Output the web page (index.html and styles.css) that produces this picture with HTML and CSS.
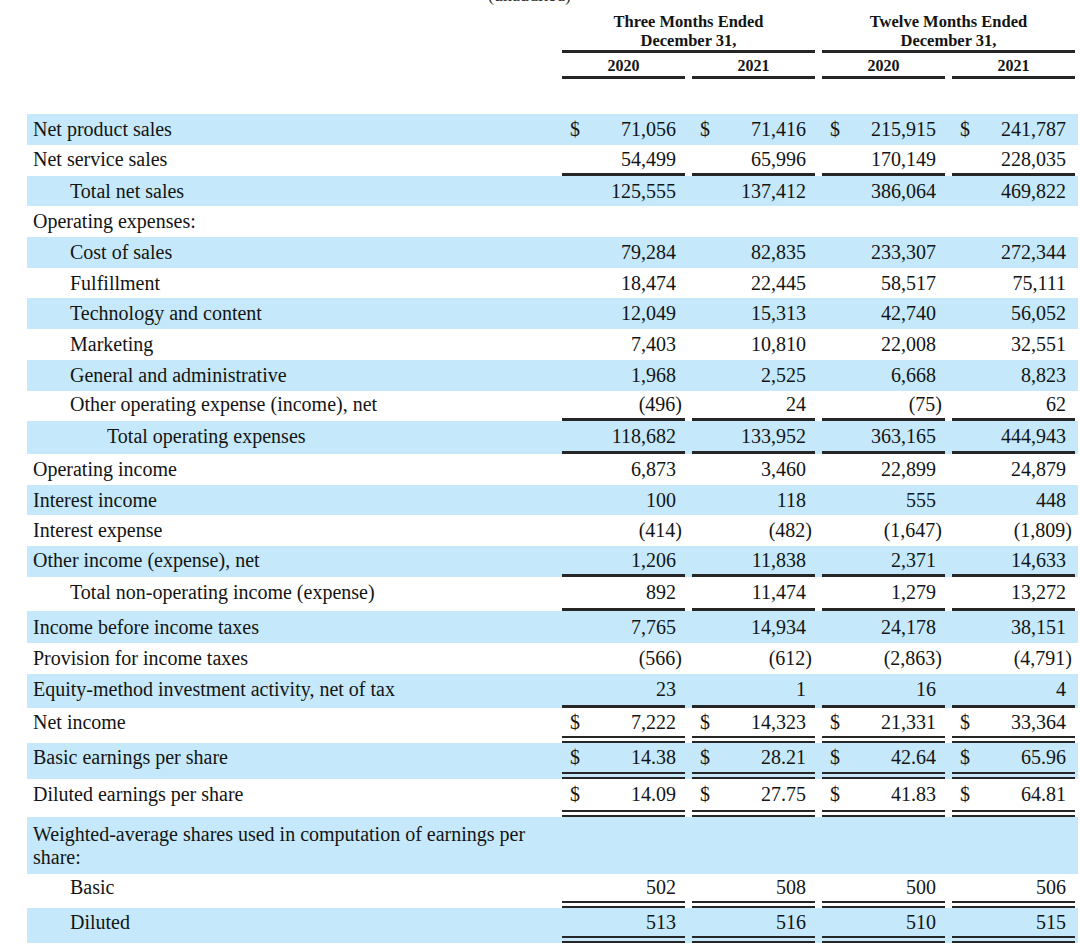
FILE: index.html
```html
<!DOCTYPE html>
<html lang="en">
<head>
<meta charset="utf-8">
<title>Consolidated Statements of Operations</title>
<link rel="stylesheet" href="styles.css">
</head>
<body>
<div class="page">
  <div class="caption"><span>(unaudited)</span></div>
  <div class="head">
    <div class="grp g1">Three Months Ended<br>December 31,</div>
    <div class="grp g2">Twelve Months Ended<br>December 31,</div>
  </div>
  <div class="years">
    <div></div>
    <div class="yr">2020</div>
    <div class="yr">2021</div>
    <div class="yr">2020</div>
    <div class="yr">2021</div>
  </div>

  <div class="tbl">
    <div class="row b h31"><div class="lbl">Net product sales</div><div class="v"><span class="d">$</span><span>71,056</span></div><div class="v"><span class="d">$</span><span>71,416</span></div><div class="v"><span class="d">$</span><span>215,915</span></div><div class="v"><span class="d">$</span><span>241,787</span></div></div>
    <div class="row u h31"><div class="lbl">Net service sales</div><div class="v"><span>54,499</span></div><div class="v"><span>65,996</span></div><div class="v"><span>170,149</span></div><div class="v"><span>228,035</span></div></div>
    <div class="row b h30"><div class="lbl i1">Total net sales</div><div class="v"><span>125,555</span></div><div class="v"><span>137,412</span></div><div class="v"><span>386,064</span></div><div class="v"><span>469,822</span></div></div>
    <div class="row h31"><div class="lbl">Operating expenses:</div><div class="v"></div><div class="v"></div><div class="v"></div><div class="v"></div></div>
    <div class="row b h31"><div class="lbl i1">Cost of sales</div><div class="v"><span>79,284</span></div><div class="v"><span>82,835</span></div><div class="v"><span>233,307</span></div><div class="v"><span>272,344</span></div></div>
    <div class="row h30"><div class="lbl i1">Fulfillment</div><div class="v"><span>18,474</span></div><div class="v"><span>22,445</span></div><div class="v"><span>58,517</span></div><div class="v"><span>75,111</span></div></div>
    <div class="row b h31"><div class="lbl i1">Technology and content</div><div class="v"><span>12,049</span></div><div class="v"><span>15,313</span></div><div class="v"><span>42,740</span></div><div class="v"><span>56,052</span></div></div>
    <div class="row h31"><div class="lbl i1">Marketing</div><div class="v"><span>7,403</span></div><div class="v"><span>10,810</span></div><div class="v"><span>22,008</span></div><div class="v"><span>32,551</span></div></div>
    <div class="row b h31"><div class="lbl i1">General and administrative</div><div class="v"><span>1,968</span></div><div class="v"><span>2,525</span></div><div class="v"><span>6,668</span></div><div class="v"><span>8,823</span></div></div>
    <div class="row u h30"><div class="lbl i1">Other operating expense (income), net</div><div class="v"><span class="neg">(496)</span></div><div class="v"><span>24</span></div><div class="v"><span class="neg">(75)</span></div><div class="v"><span>62</span></div></div>
    <div class="row b u h33"><div class="lbl i2">Total operating expenses</div><div class="v"><span>118,682</span></div><div class="v"><span>133,952</span></div><div class="v"><span>363,165</span></div><div class="v"><span>444,943</span></div></div>
    <div class="row h31"><div class="lbl">Operating income</div><div class="v"><span>6,873</span></div><div class="v"><span>3,460</span></div><div class="v"><span>22,899</span></div><div class="v"><span>24,879</span></div></div>
    <div class="row b h30"><div class="lbl">Interest income</div><div class="v"><span>100</span></div><div class="v"><span>118</span></div><div class="v"><span>555</span></div><div class="v"><span>448</span></div></div>
    <div class="row h31"><div class="lbl">Interest expense</div><div class="v"><span class="neg">(414)</span></div><div class="v"><span class="neg">(482)</span></div><div class="v"><span class="neg">(1,647)</span></div><div class="v"><span class="neg">(1,809)</span></div></div>
    <div class="row b u h31"><div class="lbl">Other income (expense), net</div><div class="v"><span>1,206</span></div><div class="v"><span>11,838</span></div><div class="v"><span>2,371</span></div><div class="v"><span>14,633</span></div></div>
    <div class="row u h34"><div class="lbl i1">Total non-operating income (expense)</div><div class="v"><span>892</span></div><div class="v"><span>11,474</span></div><div class="v"><span>1,279</span></div><div class="v"><span>13,272</span></div></div>
    <div class="row b h32"><div class="lbl">Income before income taxes</div><div class="v"><span>7,765</span></div><div class="v"><span>14,934</span></div><div class="v"><span>24,178</span></div><div class="v"><span>38,151</span></div></div>
    <div class="row h31"><div class="lbl">Provision for income taxes</div><div class="v"><span class="neg">(566)</span></div><div class="v"><span class="neg">(612)</span></div><div class="v"><span class="neg">(2,863)</span></div><div class="v"><span class="neg">(4,791)</span></div></div>
    <div class="row b u h34"><div class="lbl">Equity-method investment activity, net of tax</div><div class="v"><span>23</span></div><div class="v"><span>1</span></div><div class="v"><span>16</span></div><div class="v"><span>4</span></div></div>
    <div class="row uu h35"><div class="lbl">Net income</div><div class="v"><span class="d">$</span><span>7,222</span></div><div class="v"><span class="d">$</span><span>14,323</span></div><div class="v"><span class="d">$</span><span>21,331</span></div><div class="v"><span class="d">$</span><span>33,364</span></div></div>
    <div class="row b uu h36"><div class="lbl">Basic earnings per share</div><div class="v"><span class="d">$</span><span>14.38</span></div><div class="v"><span class="d">$</span><span>28.21</span></div><div class="v"><span class="d">$</span><span>42.64</span></div><div class="v"><span class="d">$</span><span>65.96</span></div></div>
    <div class="row uu h38"><div class="lbl">Diluted earnings per share</div><div class="v"><span class="d">$</span><span>14.09</span></div><div class="v"><span class="d">$</span><span>27.75</span></div><div class="v"><span class="d">$</span><span>41.83</span></div><div class="v"><span class="d">$</span><span>64.81</span></div></div>
    <div class="row b h57"><div class="lbl wrap">Weighted-average shares used in computation of earnings per share:</div><div class="v"></div><div class="v"></div><div class="v"></div><div class="v"></div></div>
    <div class="row uu h34"><div class="lbl i1">Basic</div><div class="v"><span>502</span></div><div class="v"><span>508</span></div><div class="v"><span>500</span></div><div class="v"><span>506</span></div></div>
    <div class="row b uu h35"><div class="lbl i1">Diluted</div><div class="v"><span>513</span></div><div class="v"><span>516</span></div><div class="v"><span>510</span></div><div class="v"><span>515</span></div></div>
  </div>
</div>
</body>
</html>
```
FILE: styles.css
```css
html, body {
  margin: 0;
  padding: 0;
  background: #ffffff;
}

.page {
  width: 1080px;
  height: 944px;
  overflow: hidden;
  font-family: "Liberation Serif", "Times New Roman", serif;
  color: #141414;
}

.caption {
  height: 5px;
  overflow: hidden;
  padding-left: 488px;
  font-size: 18px;
  line-height: 18px;
  color: #333;
}
.caption span {
  display: block;
  margin-top: -14px;
}

.head,
.years,
.row {
  display: grid;
  grid-template-columns: 528px 123px 123px 123px 123px;
  column-gap: 7px;
  margin-left: 27px;
  width: 1051px;
}

.head {
  padding-top: 7px;
  font-weight: bold;
  font-size: 16.5px;
  line-height: 19px;
  text-align: center;
}
.grp {
  border-bottom: 3px solid #262626;
  padding-bottom: 0;
}
.g1 { grid-column: 2 / span 2; }
.g2 { grid-column: 4 / span 2; }

.years {
  padding-top: 3px;
  margin-bottom: 35px;
  font-weight: bold;
  font-size: 16px;
  line-height: 19px;
  text-align: center;
}
.yr {
  border-bottom: 3px solid #262626;
  padding-bottom: 1px;
}

.row {
  box-sizing: border-box;
  font-size: 20px;
}
.row.b { background: #c5e9fa; }

.h30 { height: 30px; }
.h31 { height: 31px; }
.h32 { height: 32px; }
.h33 { height: 33px; }
.h34 { height: 34px; }
.h35 { height: 35px; }
.h36 { height: 36px; }
.h38 { height: 38px; }
.h57 { height: 57px; }

.lbl,
.v {
  box-sizing: border-box;
  display: flex;
  align-items: center;
  height: 100%;
  white-space: nowrap;
}
.lbl { padding-left: 6px; }
.lbl.i1 { padding-left: 43px; }
.lbl.i2 { padding-left: 80px; }
.lbl.wrap {
  white-space: normal;
  line-height: 23px;
  padding-right: 0;
}

.v {
  justify-content: flex-end;
  padding: 0 9px 0 8px;
}
.v .d { margin-right: auto; }
.v .neg { margin-right: -6px; }

.row.u .lbl,
.row.u .v { border-bottom: 3px solid transparent; }
.row.u .v { border-bottom-color: #262626; }

.row.uu .lbl,
.row.uu .v { border-bottom: 7px double transparent; }
.row.uu .v { border-bottom-color: #262626; }
```
